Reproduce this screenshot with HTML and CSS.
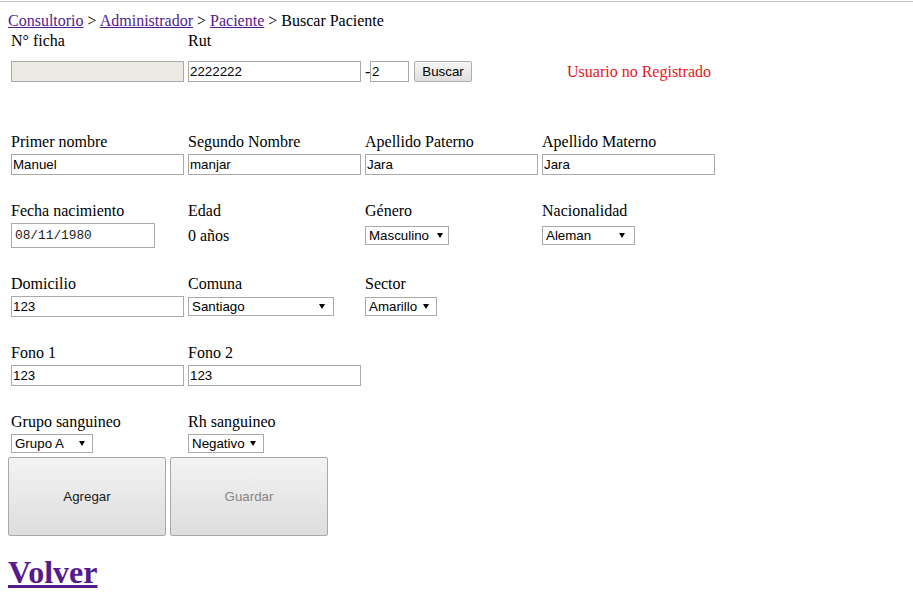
FILE: index.html
```html
<!DOCTYPE html>
<html lang="es">
<head>
<meta charset="utf-8">
<title>Buscar Paciente</title>
<link rel="stylesheet" href="styles.css">
</head>
<body>
<div class="frame">
  <div class="page">
    <div class="crumbs"><a href="#">Consultorio</a> &gt; <a href="#">Administrador</a> &gt; <a href="#">Paciente</a> &gt; Buscar Paciente</div>

    <div class="head">
      <div class="head-labels">
        <span class="cell">N° ficha</span>
        <span class="cell">Rut</span>
      </div>
      <div class="head-controls">
        <input class="field field-disabled" type="text" disabled>
        <input class="field field-rut" type="text" value="2222222">
        <span class="dash">-</span>
        <input class="field field-dv" type="text" value="2">
        <button class="btn-small" type="button">Buscar</button>
        <span class="notice">Usuario no Registrado</span>
      </div>
    </div>

    <div class="form">
      <div class="group">
        <div class="labels">
          <span>Primer nombre</span><span>Segundo Nombre</span><span>Apellido Paterno</span><span>Apellido Materno</span>
        </div>
        <div class="controls">
          <input class="field" type="text" value="Manuel">
          <input class="field" type="text" value="manjar">
          <input class="field" type="text" value="Jara">
          <input class="field" type="text" value="Jara">
        </div>
      </div>

      <div class="group">
        <div class="labels">
          <span>Fecha nacimiento</span><span>Edad</span><span>Género</span><span>Nacionalidad</span>
        </div>
        <div class="controls">
          <input class="field field-date" type="text" value="08/11/1980">
          <span class="plain">0 años</span>
          <div class="select select-genero"><span>Masculino</span><svg class="caret" viewBox="0 0 6 5"><path d="M0 0H6L3 5Z"/></svg></div>
          <div class="select select-nac"><span>Aleman</span><svg class="caret" viewBox="0 0 6 5"><path d="M0 0H6L3 5Z"/></svg></div>
        </div>
      </div>

      <div class="group">
        <div class="labels">
          <span>Domicilio</span><span>Comuna</span><span>Sector</span><span></span>
        </div>
        <div class="controls">
          <input class="field" type="text" value="123">
          <div class="select select-comuna"><span>Santiago</span><svg class="caret" viewBox="0 0 6 5"><path d="M0 0H6L3 5Z"/></svg></div>
          <div class="select select-sector"><span>Amarillo</span><svg class="caret" viewBox="0 0 6 5"><path d="M0 0H6L3 5Z"/></svg></div>
          <span></span>
        </div>
      </div>

      <div class="group">
        <div class="labels">
          <span>Fono 1</span><span>Fono 2</span><span></span><span></span>
        </div>
        <div class="controls">
          <input class="field" type="text" value="123">
          <input class="field" type="text" value="123">
          <span></span><span></span>
        </div>
      </div>

      <div class="group">
        <div class="labels">
          <span>Grupo sanguineo</span><span>Rh sanguineo</span><span></span><span></span>
        </div>
        <div class="controls">
          <div class="select select-grupo"><span>Grupo A</span><svg class="caret" viewBox="0 0 6 5"><path d="M0 0H6L3 5Z"/></svg></div>
          <div class="select select-rh"><span>Negativo</span><svg class="caret" viewBox="0 0 6 5"><path d="M0 0H6L3 5Z"/></svg></div>
          <span></span><span></span>
        </div>
      </div>
    </div>

    <div class="actions">
      <button class="btn-big" type="button">Agregar</button>
      <button class="btn-big is-disabled" type="button">Guardar</button>
    </div>

    <a class="back" href="#">Volver</a>
  </div>
</div>
</body>
</html>
```

FILE: styles.css
```css
html, body {
  margin: 0;
  padding: 0;
  background: #ffffff;
}

body {
  font-family: "Liberation Serif", "Times New Roman", serif;
  font-size: 16px;
  line-height: 18px;
  color: #000000;
}

.frame {
  margin-top: 1px;
  border-top: 1px solid #c4c4c4;
}

.page {
  padding: 8px 8px 0 8px;
}

a {
  color: #551a8b;
  text-decoration: underline;
}

.crumbs {
  height: 18px;
  line-height: 21px;
  white-space: nowrap;
}

/* header block */
.head {
  margin-top: 3px;
  padding-left: 3px;
}

.head-labels {
  display: flex;
  gap: 4px;
  height: 18px;
  line-height: 20px;
}

.head-labels .cell {
  width: 173px;
}

.head-controls {
  display: flex;
  align-items: center;
  height: 21px;
  margin-top: 12px;
}

.field {
  box-sizing: border-box;
  width: 173px;
  height: 21px;
  margin: 0;
  padding: 0 1px;
  border: 1px solid #a9a9a9;
  background: #ffffff;
  font-family: "Liberation Sans", Arial, sans-serif;
  font-size: 13.33px;
  color: #000000;
  outline: none;
}

.field-disabled {
  background: #ebebe4;
  margin-right: 4px;
}

.dash {
  margin-left: 4px;
  width: 5px;
}

.field-dv {
  width: 39px;
}

.btn-small {
  box-sizing: border-box;
  width: 58px;
  height: 21px;
  margin: 0 0 0 5px;
  padding: 0;
  border: 1px solid #acacac;
  border-radius: 2px;
  background: linear-gradient(#f7f7f7, #dedede);
  font-family: "Liberation Sans", Arial, sans-serif;
  font-size: 13.33px;
  color: #000000;
}

.notice {
  margin-left: 95px;
  color: #e8141c;
  white-space: nowrap;
}

/* main form */
.form {
  margin-top: 50px;
  padding-left: 3px;
}

.group + .group {
  margin-top: 26px;
}

.labels,
.controls {
  display: grid;
  grid-template-columns: repeat(4, 173px);
  column-gap: 4px;
}

.labels {
  height: 18px;
  line-height: 20px;
  white-space: nowrap;
}

.controls {
  margin-top: 4px;
  align-items: center;
  justify-items: start;
}

.field-date {
  width: 144px;
  height: 25px;
  padding-left: 3px;
  font-family: "Liberation Mono", "DejaVu Sans Mono", monospace;
  font-size: 12.8px;
  color: #222222;
}

.plain {
  white-space: nowrap;
}

.select {
  box-sizing: border-box;
  display: flex;
  align-items: center;
  height: 19px;
  padding: 0 7px 0 3px;
  border: 1px solid #a9a9a9;
  background: #ffffff;
  font-family: "Liberation Sans", Arial, sans-serif;
  font-size: 13.33px;
  color: #000000;
  white-space: nowrap;
}

.select .caret {
  width: 6px;
  height: 5px;
  margin-left: auto;
  fill: #000000;
}

.select-genero { width: 84px; padding-right: 5px; }
.select-nac { width: 93px; padding-right: 9px; }
.select-comuna { width: 146px; padding-right: 8px; }
.select-sector { width: 72px; }
.select-grupo { width: 82px; }
.select-rh { width: 76px; }

/* actions */
.actions {
  display: flex;
  gap: 4px;
  margin-top: 4px;
}

.btn-big {
  box-sizing: border-box;
  width: 158px;
  height: 79px;
  margin: 0;
  padding: 0;
  border: 1px solid #a9a9a9;
  border-radius: 2px;
  background: linear-gradient(#f3f3f3, #dddddd);
  font-family: "Liberation Sans", Arial, sans-serif;
  font-size: 13.33px;
  color: #1a1a1a;
}

.btn-big.is-disabled {
  color: #858585;
}

.back {
  display: inline-block;
  margin-top: 18px;
  font-size: 32px;
  line-height: 37px;
  font-weight: bold;
}
```
